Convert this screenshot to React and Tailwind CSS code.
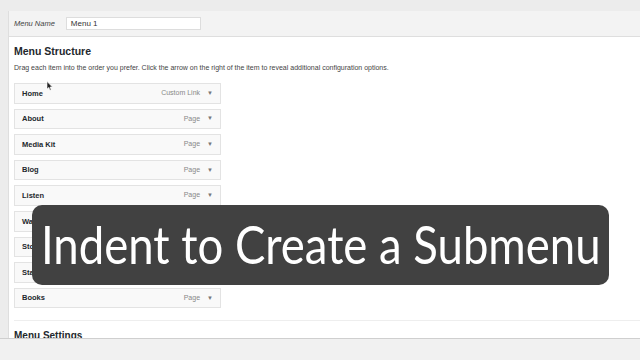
import React from 'react'

const items = [
  ['Home', 'Custom Link'],
  ['About', 'Page'],
  ['Media Kit', 'Page'],
  ['Blog', 'Page'],
  ['Listen', 'Page'],
  ['Watch', 'Page'],
  ['Store', 'Page'],
  ['Start Here', 'Page'],
  ['Books', 'Page'],
]

function MenuItem({ label, type }) {
  return (
    <div className="w-[207px] h-[20.6px] bg-[#f9f9f9] border border-[#e3e3e3] flex items-center pl-[7px] pr-[7px]">
      <span className="text-[7.5px] font-bold text-[#23282d]">{label}</span>
      <span className="ml-auto text-[7px] text-[#888]">{type}</span>
      <span className="ml-[7px] text-[6px] text-[#777]">▼</span>
    </div>
  )
}

export default function App() {
  return (
    <div className="relative w-[640px] h-[360px] overflow-hidden bg-[#ececec]" style={{ fontFamily: '"Liberation Sans", Arial, sans-serif' }}>
      <div className="flex h-full">
        <div className="w-[8px] shrink-0" />
        <div className="flex-1 flex flex-col pt-[11px]">
          <div className="h-[26px] bg-[#f3f3f3] border-l border-b border-[#dedede] flex items-center pl-[5px]">
            <span className="text-[7.5px] italic text-[#444]">Menu Name</span>
            <div className="ml-[11px] w-[135px] h-[13px] bg-white border border-[#dddddd] flex items-center px-[4px]">
              <span className="text-[8px] text-[#333]">Menu 1</span>
            </div>
          </div>
          <div className="flex-1 bg-white border-l border-[#dedede] pl-[5px] pt-[7px]">
            <h2 className="text-[10.5px] font-bold text-[#23282d] leading-[14px]">Menu Structure</h2>
            <p className="mt-[5px] text-[7px] text-[#444] leading-[10px]">
              Drag each item into the order you prefer. Click the arrow on the right of the item to reveal additional configuration options.
            </p>
            <div className="mt-[10px] flex flex-col gap-[5px]">
              {items.map(([l, t]) => (
                <MenuItem key={l} label={l} type={t} />
              ))}
            </div>
            <div className="mt-[12px] border-t border-[#eeeeee] pt-[1px]">
              <span className="text-[10px] font-bold text-[#23282d]">Menu Settings</span>
            </div>
          </div>
        </div>
      </div>
      <div className="absolute left-0 right-0 bottom-0 h-[22px] bg-[#f1f1f1] border-t border-[#cfcfcf]" />
      <svg className="absolute left-[46px] top-[81px]" width="7" height="10" viewBox="0 0 7 10">
        <path d="M1 0.5 L1 8 L2.8 6.4 L4 9.2 L5.2 8.7 L4 6 L6.4 6 Z" fill="#222" stroke="#fff" strokeWidth="0.6" />
      </svg>
      <div className="absolute left-[32px] top-[205px] w-[577px] h-[80px] rounded-[10px] bg-[#414141] flex items-center justify-center">
        <span className="whitespace-nowrap text-white text-[52px] leading-none scale-x-[0.875] pb-[2px]" style={{ fontFamily: 'Lato, "Open Sans", sans-serif' }}>
          Indent to Create a Submenu
        </span>
      </div>
    </div>
  )
}
